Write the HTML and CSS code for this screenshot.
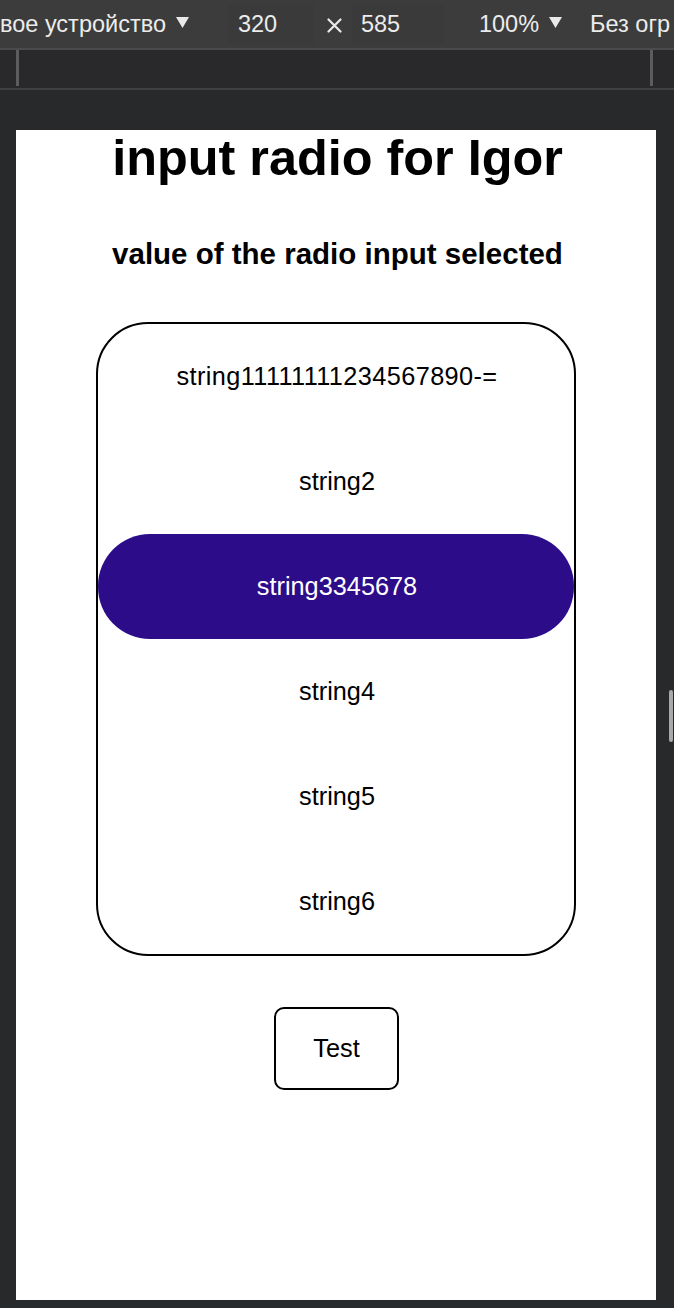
FILE: index.html
```html
<!DOCTYPE html>
<html lang="ru">
<head>
<meta charset="utf-8">
<title>input radio for Igor</title>
<link rel="stylesheet" href="styles.css">
</head>
<body>
<div class="toolbar">
  <span class="device">вое устройство</span>
  <svg class="caret" width="13" height="11" viewBox="0 0 13 11" aria-hidden="true"><path d="M0 0H13L6.5 11Z" fill="#e9e9e9"/></svg>
  <span class="dim dim-w">320</span>
  <svg class="times" width="15" height="15" viewBox="0 0 15 15" aria-hidden="true"><path d="M1.5 1.5L13.5 13.5M13.5 1.5L1.5 13.5" stroke="#e9e9e9" stroke-width="2.2" stroke-linecap="round"/></svg>
  <span class="dim dim-h">585</span>
  <span class="zoom">100%</span>
  <svg class="caret" width="13" height="11" viewBox="0 0 13 11" aria-hidden="true"><path d="M0 0H13L6.5 11Z" fill="#e9e9e9"/></svg>
  <span class="throttle">Без огр</span>
</div>
<div class="ruler">
  <span class="tick"></span>
  <span class="tick"></span>
</div>
<div class="stage">
  <main class="page">
    <h1 class="title">input radio for Igor</h1>
    <h2 class="subtitle">value of the radio input selected</h2>
    <form class="options">
      <label class="option"><input type="radio" name="opt" value="1"><span>string11111111234567890-=</span></label>
      <label class="option"><input type="radio" name="opt" value="2"><span>string2</span></label>
      <label class="option"><input type="radio" name="opt" value="3" checked><span>string3345678</span></label>
      <label class="option"><input type="radio" name="opt" value="4"><span>string4</span></label>
      <label class="option"><input type="radio" name="opt" value="5"><span>string5</span></label>
      <label class="option"><input type="radio" name="opt" value="6"><span>string6</span></label>
    </form>
    <div class="actions">
      <button class="test-btn" type="button">Test</button>
    </div>
  </main>
  <div class="scroll-thumb"></div>
</div>
</body>
</html>
```
FILE: styles.css
```css
* { box-sizing: border-box; }

html, body {
  margin: 0;
  padding: 0;
}

body {
  width: 674px;
  height: 1308px;
  overflow: hidden;
  background: #28292b;
  font-family: "Liberation Sans", Arial, sans-serif;
}

.toolbar {
  height: 50px;
  background: #3c3c3c;
  border-bottom: 2px solid #4b4b4b;
  display: flex;
  align-items: center;
  white-space: nowrap;
  overflow: hidden;
  color: #ececec;
  font-size: 23.5px;
}

.device {
  margin-left: 0;
}

.caret {
  flex: none;
  margin-left: 10px;
  margin-top: -4px;
}

.dim {
  display: inline-block;
  height: 38px;
  line-height: 38px;
  background: #3a3a3a;
  flex: none;
}

.dim-w {
  margin-left: 39px;
  width: 86px;
  padding-left: 10px;
}

.times {
  flex: none;
  margin-left: 13px;
  margin-top: 2px;
}

.dim-h {
  margin-left: 10px;
  width: 92px;
  padding-left: 9px;
}

.zoom {
  margin-left: 35px;
}

.throttle {
  margin-left: 28px;
}

.ruler {
  height: 40px;
  background: #29292b;
  border-bottom: 2px solid #414141;
  display: flex;
  justify-content: space-between;
  padding: 0 21px 2px 16px;
}

.tick {
  width: 3px;
  height: 36px;
  background: #5c5c5c;
}

.stage {
  position: relative;
  padding: 40px 18px 8px 16px;
  height: 1216px;
}

.page {
  width: 640px;
  height: 1170px;
  background: #ffffff;
  color: #000000;
  display: flex;
  flex-direction: column;
  align-items: center;
}

.title {
  margin: 0;
  font-size: 50.4px;
  line-height: 56px;
  font-weight: 700;
  padding-left: 3px;
}

.subtitle {
  margin: 51px 0 0;
  font-size: 29.5px;
  line-height: 34px;
  font-weight: 700;
  padding-left: 3px;
}

.options {
  margin: 51px 0 0;
  width: 480px;
  border: 2px solid #000;
  border-radius: 52px;
  display: flex;
  flex-direction: column;
  padding-left: 0;
}

.option {
  height: 105px;
  display: flex;
  align-items: center;
  justify-content: center;
  font-size: 25.3px;
  border-radius: 52px;
  cursor: pointer;
  padding-left: 2px;
}

.option:first-child span {
  letter-spacing: 0.4px;
}

.option input {
  appearance: none;
  margin: 0;
  width: 0;
  height: 0;
  border: 0;
}

.option:has(input:checked) {
  background: #2d0c8a;
  color: #ffffff;
}

.actions {
  margin-top: 51px;
  padding-left: 1px;
}

.test-btn {
  width: 125px;
  height: 83px;
  background: #ffffff;
  border: 2px solid #000;
  border-radius: 10px;
  font-family: "Liberation Sans", Arial, sans-serif;
  font-size: 25.3px;
  color: #000;
  padding: 0;
}

.scroll-thumb {
  position: absolute;
  left: 669px;
  top: 600px;
  width: 4px;
  height: 52px;
  border-radius: 2px;
  background: #a9a9a9;
}
```
